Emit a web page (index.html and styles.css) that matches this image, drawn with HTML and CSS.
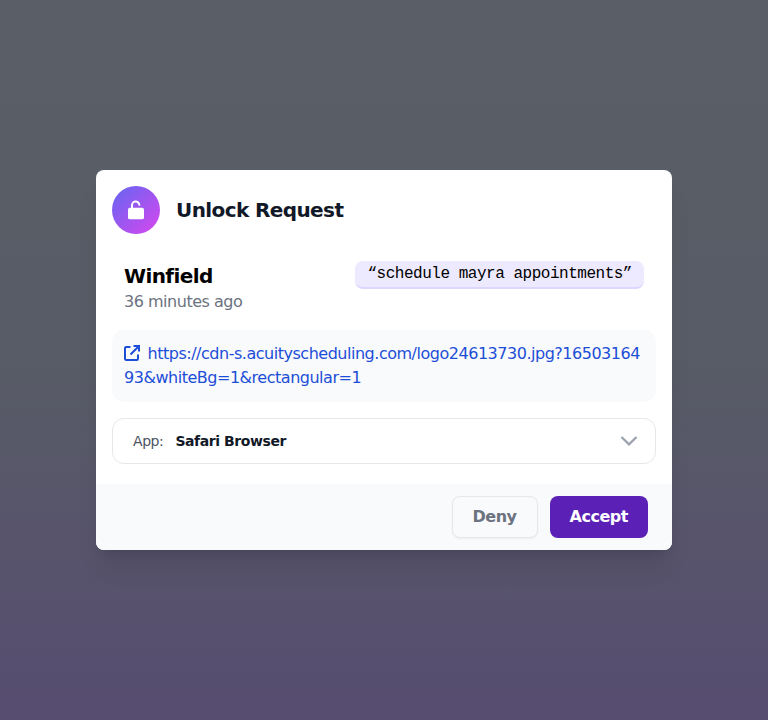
FILE: index.html
```html
<!DOCTYPE html>
<html lang="en">
<head>
<meta charset="utf-8">
<title>Unlock Request</title>
<link rel="stylesheet" href="styles.css">
</head>
<body>
<main class="dialog">
  <header class="dialog-header">
    <span class="badge">
      <svg width="24" height="24" viewBox="0 0 24 24"><rect x="4" y="9.800" width="16" height="11.500" rx="1.900" fill="currentColor"/><path d="M8 10.500V7.800a3.700 3.700 0 0 1 7.400-1" fill="none" stroke="currentColor" stroke-width="2" stroke-linecap="round"/></svg>
    </span>
    <h1 class="title">Unlock Request</h1>
  </header>
  <section class="request">
    <div>
      <h2 class="name">Winfield</h2>
      <p class="time">36 minutes ago</p>
    </div>
    <span class="phrase">“schedule mayra appointments”</span>
  </section>
  <a class="link"><svg class="link-icon" width="16" height="16" viewBox="0 0 16 16" fill="none" stroke="currentColor" stroke-width="2"><path d="M6.500 2H2.200A1.200 1.200 0 0 0 1 3.200v10.600a1.200 1.200 0 0 0 1.200 1.200h10.600a1.200 1.200 0 0 0 1.200-1.200V9.500M9.500 1H15v5.500M15 1L6.500 9.500"/></svg>https://cdn-s.acuityscheduling.com/logo24613730.jpg?1650316493&amp;whiteBg=1&amp;rectangular=1</a>
  <div class="select">
    <span class="select-label">App:</span>
    <span class="select-value">Safari Browser</span>
    <svg class="chevron" width="18" height="10" viewBox="0 0 18 10" fill="none" stroke="currentColor" stroke-width="2.3"><path d="M1.500 1L9 8.300L16.500 1"/></svg>
  </div>
  <footer class="actions">
    <button class="button deny">Deny</button>
    <button class="button accept">Accept</button>
  </footer>
</main>
</body>
</html>
```

FILE: styles.css
```css
* { box-sizing: border-box; letter-spacing: -0.03em; }
body {
  margin: 0;
  min-height: 100vh;
  display: flex;
  align-items: center;
  justify-content: center;
  background: linear-gradient(#5a5e67 0%, #585c66 50%, #57506e 88%, #564d70 100%);
  font: 16px/24px "DejaVu Sans", sans-serif;
}
h1, h2, p { margin: 0; }
.dialog {
  width: 576px;
  height: 380px;
  display: flex;
  flex-direction: column;
  background: #fff;
  border-radius: 8px;
  overflow: hidden;
  box-shadow: 0 20px 25px -5px rgb(0 0 0 / .1), 0 8px 10px -6px rgb(0 0 0 / .1);
}
.dialog-header { display: flex; align-items: center; gap: 16px; padding: 16px 16px 0; }
.badge {
  width: 48px;
  height: 48px;
  display: flex;
  align-items: center;
  justify-content: center;
  border-radius: 50%;
  color: #fff;
  background: linear-gradient(to bottom right, #6366f1, #d946ef);
}
.title { font-size: 20px; line-height: 28px; color: #111827; }
.request {
  display: flex;
  justify-content: space-between;
  align-items: flex-start;
  margin: 27px 28px 0;
}
.name { font-size: 20px; line-height: 28px; margin-top: 1px; }
.time { color: #6b7280; }
.phrase {
  height: 28px;
  padding: 1px 12px 0;
  border-radius: 8px;
  border-bottom: 2px solid #ddd6fe;
  background: #ede9fe;
  font-family: "Liberation Mono", monospace;
}
.link {
  display: block;
  height: 72px;
  margin: 16px 16px 0;
  padding: 12px;
  border-radius: 12px;
  background: #f9fafb;
  color: #1d4ed8;
  word-break: break-all;
}
.link-icon { margin-right: 7.5px; vertical-align: -2px; }
.select {
  height: 46px;
  display: flex;
  align-items: center;
  margin: 16px 16px 0;
  padding: 0 17px 0 20px;
  border: 1px solid #e5e7eb;
  border-radius: 12px;
  font-size: 14px;
}
.select-label { margin-right: 12px; color: #4b5563; }
.select-value { font-weight: 700; color: #111827; }
.chevron { margin-left: auto; color: #9ca3af; }
.actions {
  display: flex;
  justify-content: flex-end;
  gap: 12px;
  height: 66px;
  margin-top: auto;
  padding: 12px 24px;
  background: #f9fafb;
}
.button {
  height: 42px;
  padding: 0 20px;
  border: 0;
  border-radius: 8px;
  font: 700 16px/24px "DejaVu Sans", sans-serif;
}
.deny {
  border: 1px solid #e5e7eb;
  background: #f9fafb;
  color: #6b7280;
  box-shadow: 0 1px 2px rgb(0 0 0 / .05);
}
.accept { background: #5b21b6; color: #fff; }
```
